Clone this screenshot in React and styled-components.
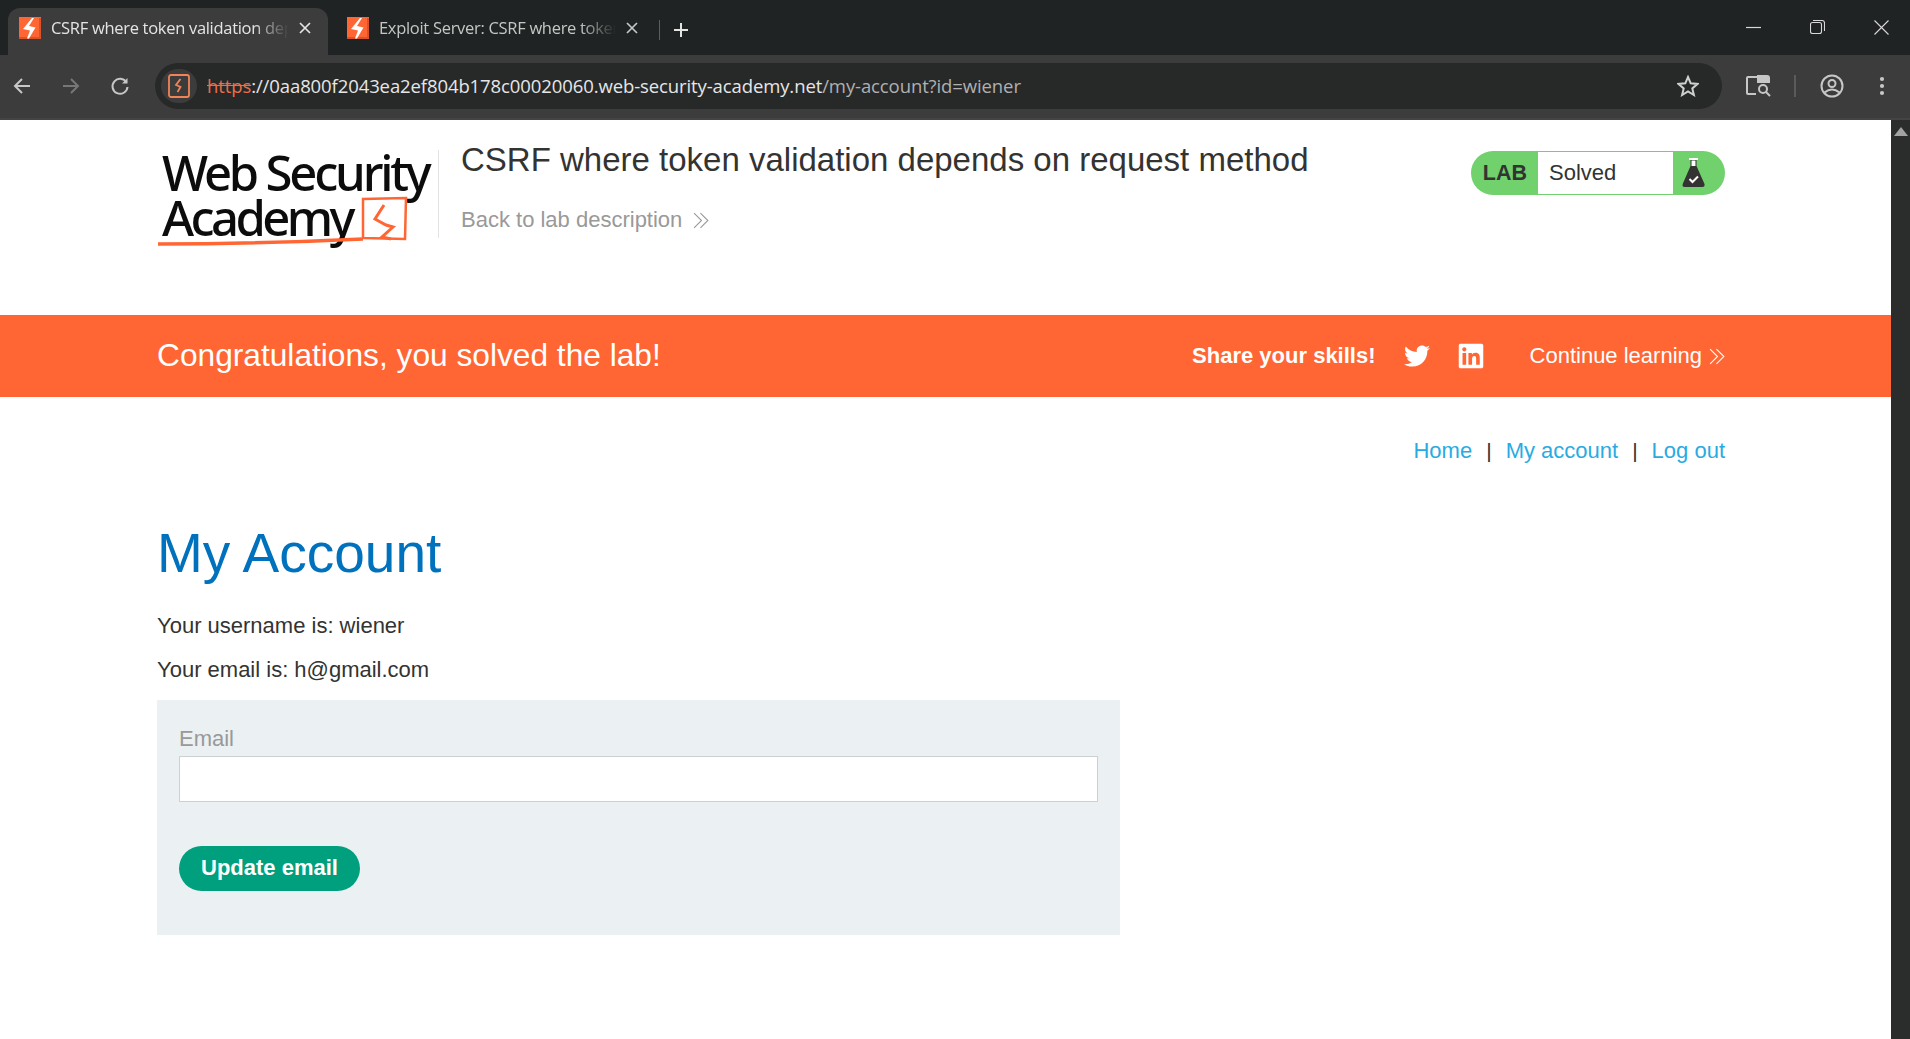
import React from "react";
import styled, { createGlobalStyle } from "styled-components";
import { FaTwitter, FaLinkedin } from "react-icons/fa";

const GlobalStyle = createGlobalStyle`
  html, body {
    margin: 0;
    padding: 0;
    height: 100%;
    overflow: hidden;
    background: #fff;
    font-family: "Liberation Sans", Arial, sans-serif;
  }
`;

const Page = styled.div`
  width: 1910px;
  height: 1039px;
  display: flex;
  flex-direction: column;
  overflow: hidden;
`;

const TabStrip = styled.div`
  height: 55px;
  flex: none;
  background: #202323;
  display: flex;
  align-items: flex-end;
  padding-left: 8px;
  font-family: "Open Sans", sans-serif;
`;

const Tab = styled.div`
  width: ${(p) => p.$width}px;
  height: 47px;
  flex: none;
  box-sizing: border-box;
  display: flex;
  align-items: center;
  padding: 0 ${(p) => p.$right}px 8px ${(p) => p.$left}px;
  gap: 10px;
  border-radius: 12px 12px 0 0;
  background: ${(p) => (p.$active ? "#3c3c3c" : "transparent")};
  color: ${(p) => (p.$active ? "#e4e4e4" : "#c4c7c5")};
  font-size: 16.5px;
  letter-spacing: -0.3px;
`;

const TabTitle = styled.span`
  flex: 1;
  white-space: nowrap;
  overflow: hidden;
  -webkit-mask-image: linear-gradient(90deg, #000 85%, transparent 100%);
  mask-image: linear-gradient(90deg, #000 85%, transparent 100%);
`;

const TabIcon = styled.svg`
  flex: none;
`;

const TabDivider = styled.div`
  width: 1px;
  height: 20px;
  background: #5c5e5e;
  margin: 0 13px 15px 6px;
`;

const NewTab = styled.div`
  display: flex;
  margin-bottom: 17px;
  color: #e4e4e4;
`;

const WindowControls = styled.div`
  margin-left: auto;
  align-self: stretch;
  display: flex;
  align-items: center;
  color: #d8d8d8;
  padding-right: 21px;
  gap: 49px;
`;

const Toolbar = styled.div`
  height: 65px;
  flex: none;
  box-sizing: border-box;
  background: #3c3c3c;
  border-bottom: 2px solid #444;
  display: flex;
  align-items: center;
  padding: 0 13px 2px 12px;
  color: #c7c7c7;
`;

const NavButton = styled.div`
  display: flex;
  width: ${(p) => p.$width || 49}px;
  flex: none;
  color: ${(p) => (p.$dim ? "#777" : "#c7c7c7")};
`;

const AddressBar = styled.div`
  width: 1567px;
  height: 46px;
  margin-left: 9px;
  flex: none;
  box-sizing: border-box;
  border-radius: 23px;
  background: #272929;
  display: flex;
  align-items: center;
  padding: 0 23px 0 6px;
  font-family: "Open Sans", sans-serif;
  font-size: 18.5px;
  letter-spacing: -0.1px;
`;

const SiteChip = styled.div`
  width: 36px;
  height: 34px;
  border-radius: 17px;
  background: #3c3c3c;
  display: flex;
  align-items: center;
  justify-content: center;
  margin-right: 10px;
`;

const Scheme = styled.span`
  color: #e96f4a;
  text-decoration: line-through;
`;

const Host = styled.span`
  color: #e6e6e6;
`;

const UrlPath = styled.span`
  color: #b0b0b0;
`;

const Url = styled.div`
  flex: 1;
  white-space: nowrap;
`;

const ToolbarRight = styled.div`
  display: flex;
  align-items: center;
  margin-left: 24px;
`;

const ToolbarSep = styled.div`
  width: 2px;
  height: 22px;
  background: #5a5a5a;
  margin: 0 24px 0 23px;
`;

const MenuDots = styled.svg`
  margin-left: 35px;
`;

const Viewport = styled.div`
  flex: 1;
  display: flex;
  min-height: 0;
`;

const Content = styled.main`
  flex: 1;
  min-width: 0;
  background: #fff;
`;

const Scrollbar = styled.div`
  width: 19px;
  flex: none;
  background: #2b2d2d;
  display: flex;
  justify-content: center;
  padding-top: 7px;
  box-sizing: border-box;
`;

const ScrollArrow = styled.div`
  width: 0;
  height: 0;
  border-left: 7px solid transparent;
  border-right: 7px solid transparent;
  border-bottom: 9px solid #a3a3a3;
`;

const Container = styled.div`
  width: 1568px;
  margin-left: 157px;
`;

const Header = styled.header`
  height: 195px;
  box-sizing: border-box;
  padding-top: 30px;
  display: flex;
  align-items: flex-start;
`;

const Logo = styled.div`
  position: relative;
  width: 280px;
  height: 100px;
  flex: none;
  color: #0c0c0c;
  font-family: "Noto Sans", sans-serif;
  font-weight: 500;
  font-size: 49px;
  line-height: 45px;
  letter-spacing: -3.2px;
`;

const LogoLine = styled.div`
  white-space: nowrap;
  padding-left: 5px;
  letter-spacing: ${(p) => p.$tracking}px;
`;

const LogoMark = styled.svg`
  position: absolute;
  left: 0;
  top: 0;
`;

const TitleBlock = styled.div`
  flex: 1;
  margin-left: 1px;
  padding-left: 22px;
  height: 88px;
  border-left: 1px solid #e3e3e3;
`;

const LabTitle = styled.h2`
  margin: -10px 0 0;
  font-weight: 400;
  font-size: 33px;
  line-height: 40px;
  color: #333332;
`;

const BackLink = styled.a`
  display: inline-flex;
  align-items: center;
  gap: 11px;
  margin-top: 27px;
  font-size: 22px;
  line-height: 26px;
  color: #999;
`;

const Status = styled.div`
  width: 254px;
  height: 44px;
  flex: none;
  margin-top: 1px;
  box-sizing: border-box;
  border-radius: 22px;
  background: #70d16d;
  display: flex;
  align-items: stretch;
  padding: 1px 0;
`;

const StatusTag = styled.div`
  width: 67px;
  display: flex;
  align-items: center;
  justify-content: flex-end;
  padding-right: 11px;
  box-sizing: border-box;
  font-size: 21.5px;
  font-weight: 700;
  color: #333332;
`;

const StatusText = styled.div`
  width: 135px;
  background: #fff;
  display: flex;
  align-items: center;
  padding-left: 11px;
  box-sizing: border-box;
  font-size: 22px;
  color: #333332;
`;

const StatusIcon = styled.div`
  flex: 1;
  display: flex;
  align-items: center;
  padding-left: 9px;
`;

const Banner = styled.section`
  height: 82px;
  background: #ff6633;
  color: #fff;
`;

const BannerInner = styled.div`
  width: 1569px;
  height: 100%;
  margin-left: 157px;
  display: flex;
  align-items: center;
`;

const BannerTitle = styled.h4`
  margin: 0 0 2px;
  font-weight: 400;
  font-size: 31.7px;
  flex: 1;
`;

const ShareLabel = styled.span`
  font-weight: 700;
  font-size: 22px;
  margin-right: 28px;
`;

const ShareIcon = styled.span`
  display: flex;
  margin-right: ${(p) => p.$gap}px;
`;

const Continue = styled.a`
  display: flex;
  align-items: center;
  gap: 7px;
  font-size: 22px;
`;

const TopLinks = styled.nav`
  margin-top: 41px;
  display: flex;
  justify-content: flex-end;
  align-items: center;
  font-size: 22px;
  line-height: 26px;
  color: #333332;
`;

const TopLink = styled.a`
  color: #29abe2;
`;

const Pipe = styled.span`
  margin: 0 14px;
  font-size: 21px;
`;

const Heading = styled.h1`
  margin: 55px 0 0;
  font-weight: 400;
  font-size: 55px;
  line-height: 68px;
  color: #0071bc;
`;

const InfoLine = styled.p`
  margin: ${(p) => p.$top}px 0 0;
  font-size: 22px;
  line-height: 26px;
  color: #333332;
`;

const EmailForm = styled.form`
  width: 963px;
  height: 235px;
  margin-top: 17px;
  box-sizing: border-box;
  padding: 26px 22px 0;
  background: #ebf0f2;
`;

const FieldLabel = styled.label`
  display: block;
  font-size: 22px;
  line-height: 26px;
  color: #999;
`;

const TextInput = styled.input`
  display: block;
  width: 100%;
  height: 46px;
  margin-top: 4px;
  box-sizing: border-box;
  border: 1px solid #cbd0d1;
  background: #fff;
  outline: none;
`;

const SubmitButton = styled.button`
  display: block;
  width: 181px;
  height: 45px;
  margin-top: 44px;
  border: 0;
  border-radius: 23px;
  background: #009f7e;
  color: #fff;
  font-family: inherit;
  font-weight: 700;
  font-size: 22px;
  padding: 0 0 2px;
`;

const Favicon = () => (
  <TabIcon width="22" height="22" viewBox="0 0 22 22">
    <rect width="22" height="22" fill="#ff6633" />
    <path d="M20 1 H22 V22 H0 V20 H20 Z" fill="#d9532a" />
    <path d="M13 1 L4 12 L11 13.5 L8 21.5 L10 21.5 L16.5 10.5 L10 9 L15 1 Z" fill="#fff" />
  </TabIcon>
);

const CloseX = () => (
  <TabIcon width="12" height="12" viewBox="0 0 12 12" stroke="currentColor" strokeWidth="1.7" fill="none">
    <path d="M1 1 L11 11 M11 1 L1 11" />
  </TabIcon>
);

const DoubleChevron = ({ color, size = 17 }) => (
  <svg width={size} height={size} viewBox="0 0 16 16" fill="none" stroke={color} strokeWidth="1">
    <path d="M1 1 L8 8 L1 15 M7 1 L14 8 L7 15" />
  </svg>
);

const Flask = () => (
  <svg width="24" height="32" viewBox="0 0 24 32">
    <rect x="7" y="1" width="9" height="2" fill="#fff" />
    <path d="M8.5 3 H14.5 V9 L22.5 27 Q23 30 20.5 30 H2.5 Q0 30 0.7 27 L8.5 9 Z" fill="#333332" />
    <path d="M9.5 3.5 H13.5 V9 H9.5 Z" fill="#fff" />
    <path d="M7.5 22 L10.5 25 L16 19.5" stroke="#fff" strokeWidth="2" fill="none" />
  </svg>
);

export default function App() {
  return (
    <Page>
      <GlobalStyle />
      <TabStrip>
        <Tab $active $width={320} $left={11} $right={17}>
          <Favicon />
          <TabTitle>CSRF where token validation depends on</TabTitle>
          <CloseX />
        </Tab>
        <Tab $width={325} $left={19} $right={15}>
          <Favicon />
          <TabTitle>Exploit Server: CSRF where token validation</TabTitle>
          <CloseX />
        </Tab>
        <TabDivider />
        <NewTab>
          <svg width="16" height="16" viewBox="0 0 16 16" stroke="currentColor" strokeWidth="2">
            <path d="M8 1 V15 M1 8 H15" />
          </svg>
        </NewTab>
        <WindowControls>
          <svg width="15" height="15" viewBox="0 0 15 15" stroke="currentColor" strokeWidth="1.2">
            <path d="M0 7.5 H15" />
          </svg>
          <svg width="15" height="15" viewBox="0 0 15 15" stroke="currentColor" strokeWidth="1.1" fill="none">
            <rect x="0.5" y="2.5" width="11" height="11" rx="2" />
            <path d="M3 0.5 H12 Q14.5 0.5 14.5 3 V11" />
          </svg>
          <svg width="15" height="15" viewBox="0 0 15 15" stroke="currentColor" strokeWidth="1.1">
            <path d="M0.5 0.5 L14.5 14.5 M14.5 0.5 L0.5 14.5" />
          </svg>
        </WindowControls>
      </TabStrip>
      <Toolbar>
        <NavButton>
          <svg width="20" height="20" viewBox="0 0 20 20" fill="none" stroke="currentColor" strokeWidth="2">
            <path d="M18 10 H3 M10 3 L3 10 L10 17" />
          </svg>
        </NavButton>
        <NavButton $dim>
          <svg width="20" height="20" viewBox="0 0 20 20" fill="none" stroke="currentColor" strokeWidth="2">
            <path d="M2 10 H17 M10 3 L17 10 L10 17" />
          </svg>
        </NavButton>
        <NavButton $width={36}>
          <svg width="20" height="20" viewBox="0 0 20 20" fill="none" stroke="currentColor" strokeWidth="2">
            <path d="M16.5 6.5 A7.5 7.5 0 1 0 17.5 11" />
            <path d="M17.5 2 V7.5 H12 Z" fill="currentColor" stroke="none" />
          </svg>
        </NavButton>
        <AddressBar>
          <SiteChip>
            <svg width="22" height="24" viewBox="0 0 22 24" fill="none" stroke="#f08457" strokeWidth="1.8">
              <rect x="1" y="1" width="20" height="22" rx="2" />
              <path d="M12.5 5 L8 11 L12.5 13 L9.5 18" />
            </svg>
          </SiteChip>
          <Url>
            <Scheme>https</Scheme>
            <Host>://0aa800f2043ea2ef804b178c00020060.web-security-academy.net</Host>
            <UrlPath>/my-account?id=wiener</UrlPath>
          </Url>
          <svg width="22" height="22" viewBox="0 0 22 22" fill="none" stroke="#d0d0d0" strokeWidth="2">
            <path d="M11 2 L13.7 8.3 L20.5 8.9 L15.3 13.4 L16.9 20 L11 16.5 L5.1 20 L6.7 13.4 L1.5 8.9 L8.3 8.3 Z" />
          </svg>
        </AddressBar>
        <ToolbarRight>
          <svg width="25" height="22" viewBox="0 0 25 22" fill="none" stroke="#c7c7c7" strokeWidth="2">
            <path d="M12 2 H2 Q1 2 1 3 V18 Q1 19 2 19 H10" />
            <path d="M12 1 H21 Q23 1 23 3 V7 H12 Z" fill="#c7c7c7" />
            <circle cx="17" cy="14" r="4" />
            <path d="M20 17 L24 21" />
          </svg>
          <ToolbarSep />
          <svg width="24" height="24" viewBox="0 0 24 24" fill="none" stroke="#c7c7c7" strokeWidth="2">
            <circle cx="12" cy="12" r="10.5" />
            <circle cx="12" cy="9.5" r="3.5" />
            <path d="M4.5 18.5 Q12 12.5 19.5 18.5" />
          </svg>
          <MenuDots width="6" height="20" viewBox="0 0 6 20" fill="#c7c7c7">
            <circle cx="3" cy="3" r="2.1" />
            <circle cx="3" cy="10" r="2.1" />
            <circle cx="3" cy="17" r="2.1" />
          </MenuDots>
        </ToolbarRight>
      </Toolbar>
      <Viewport>
        <Content>
          <Container>
            <Header>
              <Logo>
                <LogoLine>Web Security</LogoLine>
                <LogoLine $tracking={-3.6}>Academy</LogoLine>
                <LogoMark width="280" height="100" viewBox="0 0 280 100" fill="none">
                  <path d="M1 94 Q100 94 206 89" stroke="#ff6633" strokeWidth="3.5" />
                  <path d="M206 89 L206 49 L249 48 L248 89 L206 88" stroke="#ff6633" strokeWidth="2.5" />
                  <path d="M227 55 L218 69 L229 75 L236 77 L225 87 L234 89" stroke="#ff6633" strokeWidth="3" />
                </LogoMark>
              </Logo>
              <TitleBlock>
                <LabTitle>CSRF where token validation depends on request method</LabTitle>
                <BackLink>
                  Back to lab description
                  <DoubleChevron color="#999" />
                </BackLink>
              </TitleBlock>
              <Status>
                <StatusTag>LAB</StatusTag>
                <StatusText>Solved</StatusText>
                <StatusIcon><Flask /></StatusIcon>
              </Status>
            </Header>
          </Container>
          <Banner>
            <BannerInner>
              <BannerTitle>Congratulations, you solved the lab!</BannerTitle>
              <ShareLabel>Share your skills!</ShareLabel>
              <ShareIcon $gap={27}><FaTwitter size={26} /></ShareIcon>
              <ShareIcon $gap={45}><FaLinkedin size={28} /></ShareIcon>
              <Continue>
                Continue learning
                <DoubleChevron color="#fff" />
              </Continue>
            </BannerInner>
          </Banner>
          <Container>
            <TopLinks>
              <TopLink>Home</TopLink>
              <Pipe>|</Pipe>
              <TopLink>My account</TopLink>
              <Pipe>|</Pipe>
              <TopLink>Log out</TopLink>
            </TopLinks>
            <Heading>My Account</Heading>
            <InfoLine $top={26}>Your username is: wiener</InfoLine>
            <InfoLine $top={18}>Your email is: h@gmail.com</InfoLine>
            <EmailForm onSubmit={(e) => e.preventDefault()}>
              <FieldLabel>Email</FieldLabel>
              <TextInput type="email" />
              <SubmitButton>Update email</SubmitButton>
            </EmailForm>
          </Container>
        </Content>
        <Scrollbar><ScrollArrow /></Scrollbar>
      </Viewport>
    </Page>
  );
}
